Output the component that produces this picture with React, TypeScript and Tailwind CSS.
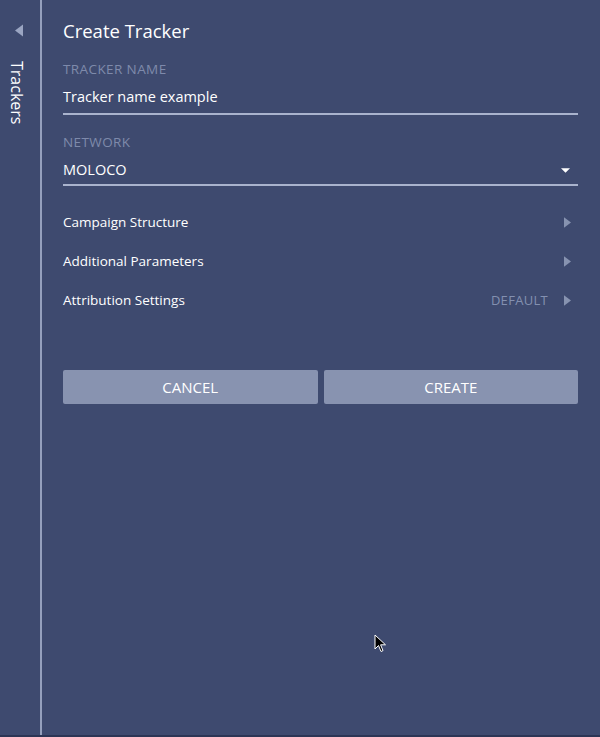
import React from 'react';

const Caret = ({ dir, className }: { dir: 'left' | 'right' | 'down'; className?: string }) => {
  const pts = dir === 'left' ? '8,0 8,12 0,6' : dir === 'right' ? '0,0 0,12 8,6' : '0,0 10,0 5,5';
  const vb = dir === 'down' ? '0 0 10 5' : '0 0 8 12';
  return (
    <svg viewBox={vb} className={className} fill="currentColor">
      <polygon points={pts} />
    </svg>
  );
};

const Row = ({ label, value }: { label: string; value?: string }) => (
  <div className="flex items-center h-[39px]">
    <span className="text-[13.5px] text-white flex-1">{label}</span>
    {value && <span className="text-[13px] text-[#8390b0] mr-[16px] tracking-[0.3px]">{value}</span>}
    <Caret dir="right" className="w-[7px] h-[11px] text-[#8793b0] mr-[7px]" />
  </div>
);

const App = () => {
  return (
    <div
      className="relative w-[600px] h-[737px] bg-[#3e4a6f] flex overflow-hidden"
      style={{ fontFamily: '"Open Sans", "Liberation Sans", sans-serif' }}
    >
      {/* sidebar */}
      <div className="w-[40px] flex flex-col items-center pt-[24px]">
        <Caret dir="left" className="w-[8px] h-[13px] text-[#9aa5c2] ml-[-2px]" />
        <div className="mt-[24px] text-white text-[16px] [writing-mode:vertical-rl] leading-none ml-[-6px]">Trackers</div>
      </div>
      <div className="w-[2px] h-[735px] bg-[#95a0bd]" />

      {/* panel */}
      <div className="flex-1 pl-[21px] pr-[22px] pt-[18px]">
        <h1 className="text-[18.5px] text-white leading-[26px]">Create Tracker</h1>

        <div className="mt-[16px] text-[13.5px] text-[#7e8aab] tracking-[0.4px] leading-[18px]">TRACKER NAME</div>
        <div className="mt-[9px] text-[14.5px] text-white leading-[20px]">Tracker name example</div>
        <div className="mt-[6px] h-[2px] bg-[#a9b3cd]" />

        <div className="mt-[18px] text-[13.5px] text-[#7e8aab] tracking-[0.4px] leading-[18px]">NETWORK</div>
        <div className="mt-[9px] flex items-center justify-between leading-[20px]">
          <span className="text-[14.5px] text-white">MOLOCO</span>
          <Caret dir="down" className="w-[9px] h-[5px] text-white mr-[8px]" />
        </div>
        <div className="mt-[4px] h-[2px] bg-[#a9b3cd]" />

        <div className="mt-[17px]">
          <Row label="Campaign Structure" />
          <Row label="Additional Parameters" />
          <Row label="Attribution Settings" value="DEFAULT" />
        </div>

        <div className="mt-[50px] flex gap-[6px]">
          <button className="flex-1 h-[34px] rounded-[2px] bg-[#8893b0] text-white text-[15px]">CANCEL</button>
          <button className="flex-1 h-[34px] rounded-[2px] bg-[#8893b0] text-white text-[15px]">CREATE</button>
        </div>
      </div>

      <div className="absolute left-0 right-0 bottom-0 h-[2px] bg-[#2c3555]" />

      {/* mouse cursor */}
      <svg className="absolute left-[374px] top-[634px] w-[13px] h-[19px]" viewBox="0 0 13 19">
        <path d="M1 1 L1 15 L4.5 11.5 L7 17.5 L9 16.6 L6.6 10.8 L11.5 10.8 Z" fill="#000" stroke="#fff" strokeWidth="1" />
      </svg>
    </div>
  );
};

export default App;
